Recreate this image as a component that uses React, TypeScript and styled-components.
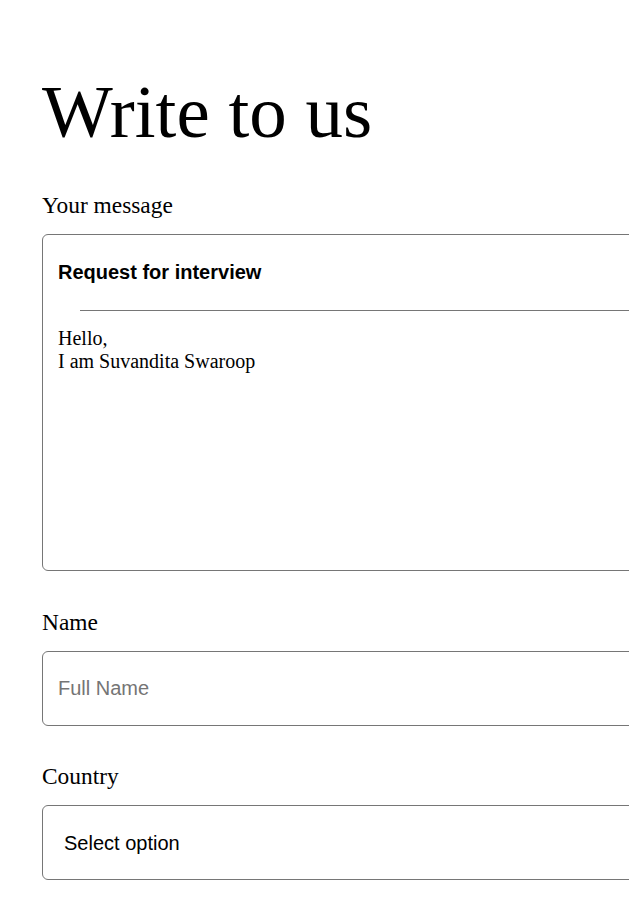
import React from "react";
import styled, { createGlobalStyle } from "styled-components";

const GlobalStyle = createGlobalStyle`
  html, body {
    margin: 0;
    padding: 0;
    overflow: hidden;
    background: #ffffff;
  }
  body {
    font-family: "Liberation Serif", "Times New Roman", serif;
    color: #000000;
  }
`;

const Page = styled.main`
  display: flex;
  flex-direction: column;
  padding: 69px 0 0 42px;
  width: 700px;
  box-sizing: border-box;
`;

const Heading = styled.h1`
  margin: 0 0 37px;
  font-family: "Liberation Serif", "Times New Roman", serif;
  font-weight: 400;
  font-size: 75px;
  line-height: normal;
`;

const Group = styled.section`
  display: flex;
  flex-direction: column;
  margin-bottom: 37.5px;
`;

const Label = styled.label`
  display: block;
  font-family: "Liberation Serif", "Times New Roman", serif;
  font-size: 23.4px;
  line-height: normal;
  margin-bottom: 15px;
`;

const Box = styled.div<{ $height?: number }>`
  box-sizing: border-box;
  width: 100%;
  border: 1px solid #767676;
  border-radius: 6px;
  background: #fff;
  ${(p) => (p.$height ? `height: ${p.$height}px;` : "")}
`;

const MessageBox = styled(Box)`
  display: flex;
  flex-direction: column;
  padding: 15px;
`;

const Subject = styled.div`
  margin-top: 11px;
  font-family: "Liberation Sans", Arial, sans-serif;
  font-weight: 700;
  font-size: 20px;
  line-height: normal;
`;

const Divider = styled.hr`
  border: none;
  height: 1px;
  background: #767676;
  margin: 26px 0 16px 22px;
`;

const Body = styled.div`
  font-family: "Liberation Serif", "Times New Roman", serif;
  font-size: 20px;
  line-height: normal;
  white-space: pre-line;
`;

const TextInput = styled.input`
  box-sizing: border-box;
  width: 100%;
  height: 75px;
  border: 1px solid #767676;
  border-radius: 6px;
  padding: 0 15px;
  font-family: "Liberation Sans", Arial, sans-serif;
  font-size: 20px;
  color: #000;
  outline: none;
  &::placeholder {
    color: #757575;
  }
`;

const Select = styled.select`
  appearance: none;
  box-sizing: border-box;
  width: 100%;
  height: 75px;
  border: 1px solid #767676;
  border-radius: 6px;
  padding: 0 21px;
  background: #fff;
  font-family: "Liberation Sans", Arial, sans-serif;
  font-size: 20px;
  color: #000;
  outline: none;
`;

export default function App() {
  return (
    <>
      <GlobalStyle />
      <Page>
        <Heading>Write to us</Heading>
        <Group>
          <Label>Your message</Label>
          <MessageBox $height={337}>
            <Subject>Request for interview</Subject>
            <Divider />
            <Body>{"Hello,\nI am Suvandita Swaroop"}</Body>
          </MessageBox>
        </Group>
        <Group>
          <Label htmlFor="name">Name</Label>
          <TextInput id="name" placeholder="Full Name" />
        </Group>
        <Group>
          <Label htmlFor="country">Country</Label>
          <Select id="country" defaultValue="">
            <option value="">Select option</option>
            <option value="in">India</option>
            <option value="us">United States</option>
          </Select>
        </Group>
      </Page>
    </>
  );
}
